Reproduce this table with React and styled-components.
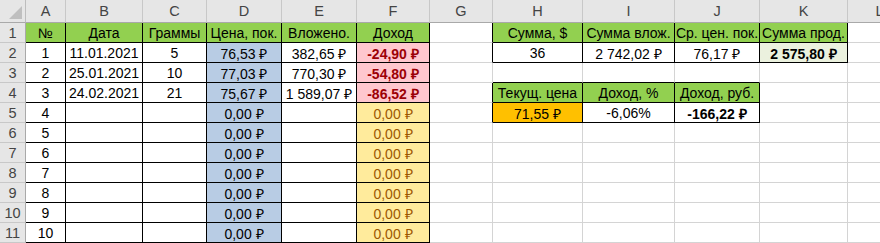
import styled, { createGlobalStyle } from "styled-components";

const GlobalStyle = createGlobalStyle`
  html, body {
    margin: 0;
    padding: 0;
    background: #ffffff;
    overflow: hidden;
  }
  body {
    font-family: "Liberation Sans", Arial, sans-serif;
  }
`;

const COLS = ["A", "B", "C", "D", "E", "F", "G", "H", "I", "J", "K", "L"];
const WIDTHS = [26, 40, 77, 64, 75, 75, 73, 63, 90, 92, 85, 88, 64];

const GREEN = { bg: "#92d050" };
const BLUE = { bg: "#b8cce4" };
const BAD = { bg: "#ffc7ce", color: "#9c0006", bold: true };
const NEUTRAL = { bg: "#ffeb9c", color: "#9c5700" };

// rows of cells A..L
const rows = [
  [
    { t: "№", ...GREEN },
    { t: "Дата", ...GREEN },
    { t: "Граммы", ...GREEN },
    { t: "Цена, пок.", ...GREEN },
    { t: "Вложено.", ...GREEN },
    { t: "Доход", ...GREEN },
    {},
    { t: "Сумма, $", ...GREEN },
    { t: "Сумма влож.", ...GREEN },
    { t: "Ср. цен. пок.", ...GREEN },
    { t: "Сумма прод.", ...GREEN },
    {},
  ],
  [
    { t: "1" },
    { t: "11.01.2021" },
    { t: "5" },
    { t: "76,53 ₽", ...BLUE },
    { t: "382,65 ₽" },
    { t: "-24,90 ₽", ...BAD },
    {},
    { t: "36" },
    { t: "2 742,02 ₽" },
    { t: "76,17 ₽" },
    { t: "2 575,80 ₽", bg: "#ebf1de", bold: true },
    {},
  ],
  [
    { t: "2" },
    { t: "25.01.2021" },
    { t: "10" },
    { t: "77,03 ₽", ...BLUE },
    { t: "770,30 ₽" },
    { t: "-54,80 ₽", ...BAD },
  ],
  [
    { t: "3" },
    { t: "24.02.2021" },
    { t: "21" },
    { t: "75,67 ₽", ...BLUE },
    { t: "1 589,07 ₽" },
    { t: "-86,52 ₽", ...BAD },
    {},
    { t: "Текущ. цена", ...GREEN },
    { t: "Доход, %", ...GREEN },
    { t: "Доход, руб.", ...GREEN },
  ],
  [
    { t: "4" },
    {},
    {},
    { t: "0,00 ₽", ...BLUE },
    {},
    { t: "0,00 ₽", ...NEUTRAL },
    {},
    { t: "71,55 ₽", bg: "#ffc000" },
    { t: "-6,06%" },
    { t: "-166,22 ₽", bold: true },
  ],
];

for (let n = 5; n <= 10; n++) {
  rows.push([
    { t: String(n) },
    {},
    {},
    { t: "0,00 ₽", ...BLUE },
    {},
    { t: "0,00 ₽", ...NEUTRAL },
  ]);
}

// boxed (black bordered) ranges: [r0, r1, c0, c1], zero-based data rows / cols A=0
const boxes = [
  [0, 10, 0, 5],
  [0, 1, 7, 10],
  [3, 4, 7, 9],
];

const boxed = (r, c) =>
  boxes.some(([r0, r1, c0, c1]) => r >= r0 && r <= r1 && c >= c0 && c <= c1);

const Sheet = styled.div`
  display: grid;
  grid-template-columns: ${WIDTHS.map((w) => `${w}px`).join(" ")};
  grid-template-rows: 23px repeat(11, 20px);
  width: max-content;
  font-size: 14px;
  color: #000000;
`;

const Corner = styled.div`
  position: relative;
  background: #e6e6e6;
  border-right: 1px solid #bdbdbd;
  border-bottom: 1px solid #a9a9a9;
  box-sizing: border-box;

  &::after {
    content: "";
    position: absolute;
    right: 3px;
    bottom: 3px;
    width: 0;
    height: 0;
    border-left: 13px solid transparent;
    border-bottom: 13px solid #bfbfbf;
  }
`;

const ColHead = styled.div`
  display: flex;
  align-items: center;
  justify-content: center;
  background: #e6e6e6;
  color: #444444;
  font-size: 14.5px;
  border-right: 1px solid #c8c8c8;
  border-bottom: 1px solid #a9a9a9;
  box-sizing: border-box;
`;

const RowHead = styled.div`
  display: flex;
  align-items: center;
  justify-content: center;
  background: #e6e6e6;
  color: #444444;
  font-size: 14.5px;
  border-right: 1px solid #a9a9a9;
  border-bottom: 1px solid #c8c8c8;
  box-sizing: border-box;
`;

const Cell = styled.div`
  display: flex;
  align-items: center;
  justify-content: center;
  white-space: nowrap;
  overflow: hidden;
  padding-top: 1px;
  box-sizing: border-box;
  background: ${(p) => p.$bg || "#ffffff"};
  color: ${(p) => p.$color || "#000000"};
  font-weight: ${(p) => (p.$bold ? 700 : 400)};
  border-right: 1px solid ${(p) => (p.$br ? "#000000" : "#d4d4d4")};
  border-bottom: 1px solid ${(p) => (p.$bb ? "#000000" : "#d4d4d4")};
`;

function App() {
  return (
    <>
      <GlobalStyle />
      <Sheet>
        <Corner />
        {COLS.map((c) => (
          <ColHead key={c}>{c}</ColHead>
        ))}
        {rows.map((row, r) => (
          <Row key={r} row={row} r={r} />
        ))}
      </Sheet>
    </>
  );
}

function Row({ row, r }) {
  return (
    <>
      <RowHead>{r + 1}</RowHead>
      {COLS.map((_, c) => {
        const cell = row[c] || {};
        return (
          <Cell
            key={c}
            $bg={cell.bg}
            $color={cell.color}
            $bold={cell.bold}
            $br={boxed(r, c) || boxed(r, c + 1)}
            $bb={boxed(r, c) || boxed(r + 1, c)}
          >
            {cell.t}
          </Cell>
        );
      })}
    </>
  );
}

export default App;
